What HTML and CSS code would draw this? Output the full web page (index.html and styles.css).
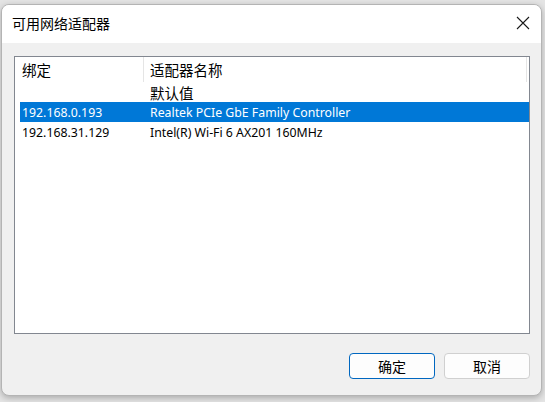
FILE: index.html
```html
<html>
<head>
<title>可用网络适配器</title>
<link rel="stylesheet" href="styles.css">
</head>
<body>
<div class="window">
  <div class="titlebar">
    <span class="title">可用网络适配器</span>
    <span class="close">
      <svg width="14" height="14" viewBox="0 0 14 14"><path d="M1 1 L13 13 M13 1 L1 13" stroke="#1a1a1a" stroke-width="1.1" fill="none"/></svg>
    </span>
  </div>
  <div class="content">
    <div class="listview">
      <div class="header">
        <div class="hcol first"><span class="cjk">绑定</span></div>
        <div class="hcol second"><span class="cjk">适配器名称</span></div>
        <div class="hrest"></div>
      </div>
      <div class="row">
        <div class="cell first"></div>
        <div class="cell second"><span class="cjk">默认值</span></div>
      </div>
      <div class="row selected">
        <div class="cell first">192.168.0.193</div>
        <div class="cell second">Realtek PCIe GbE Family Controller</div>
      </div>
      <div class="row">
        <div class="cell first">192.168.31.129</div>
        <div class="cell second">Intel(R) Wi-Fi 6 AX201 160MHz</div>
      </div>
    </div>
    <div class="buttons">
      <button class="btn default">确定</button>
      <button class="btn">取消</button>
    </div>
  </div>
</div>
</body>
</html>
```

FILE: styles.css
```css
body {
  margin: 0;
  padding: 4px 3px 6px 1px;
  background-color: #e4e4e4;
  font-family: "Noto Sans", "Noto Sans CJK SC", sans-serif;
  color: #000;
}
.window {
  height: 390px;
  border: 1px solid #b4b4b4;
  border-radius: 8px;
  background-color: #f0f0f0;
  overflow: hidden;
  box-shadow: 0 2px 6px rgba(0, 0, 0, 0.25);
  display: flex;
  flex-direction: column;
}
.titlebar {
  height: 38px;
  background-color: #fff;
  display: flex;
  align-items: center;
  justify-content: space-between;
  padding: 0 11px 3px 10px;
  box-sizing: border-box;
  flex-shrink: 0;
}
.title {
  font-family: "Noto Sans CJK SC", sans-serif;
  font-size: 14px;
}
.close {
  display: flex;
}
.content {
  flex: 1;
  display: flex;
  flex-direction: column;
  padding: 13px 11px 16px 12px;
}
.listview {
  height: 276px;
  border: 1px solid #828790;
  background-color: #fff;
  font-size: 12.3px;
}
.header {
  height: 25px;
  display: flex;
}
.hcol {
  display: flex;
  align-items: center;
  border-right: 1px solid #e5e5e5;
}
.hcol.first {
  width: 121px;
  padding-left: 7px;
}
.hcol.second {
  flex: 1;
  padding-left: 6px;
  margin-right: 1px;
}
.hrest {
  width: 1px;
}
.cjk {
  font-family: "Noto Sans CJK SC", sans-serif;
  font-size: 14.5px;
}
.row {
  height: 20px;
  display: flex;
  align-items: center;
  margin-left: 5px;
}
.row.selected {
  background-color: #0078d7;
  color: #fff;
}
.cell.first {
  width: 123px;
  padding-left: 2px;
}
.cell.second {
  padding-left: 5px;
}
.buttons {
  display: flex;
  justify-content: flex-end;
  gap: 9px;
  margin-top: auto;
}
.btn {
  width: 86px;
  height: 26px;
  border: 1px solid #d0d0d0;
  border-radius: 4px;
  background-color: #fdfdfd;
  font-family: "Noto Sans CJK SC", sans-serif;
  font-size: 14px;
  padding: 0;
}
.btn.default {
  border-color: #0067c0;
}
```
